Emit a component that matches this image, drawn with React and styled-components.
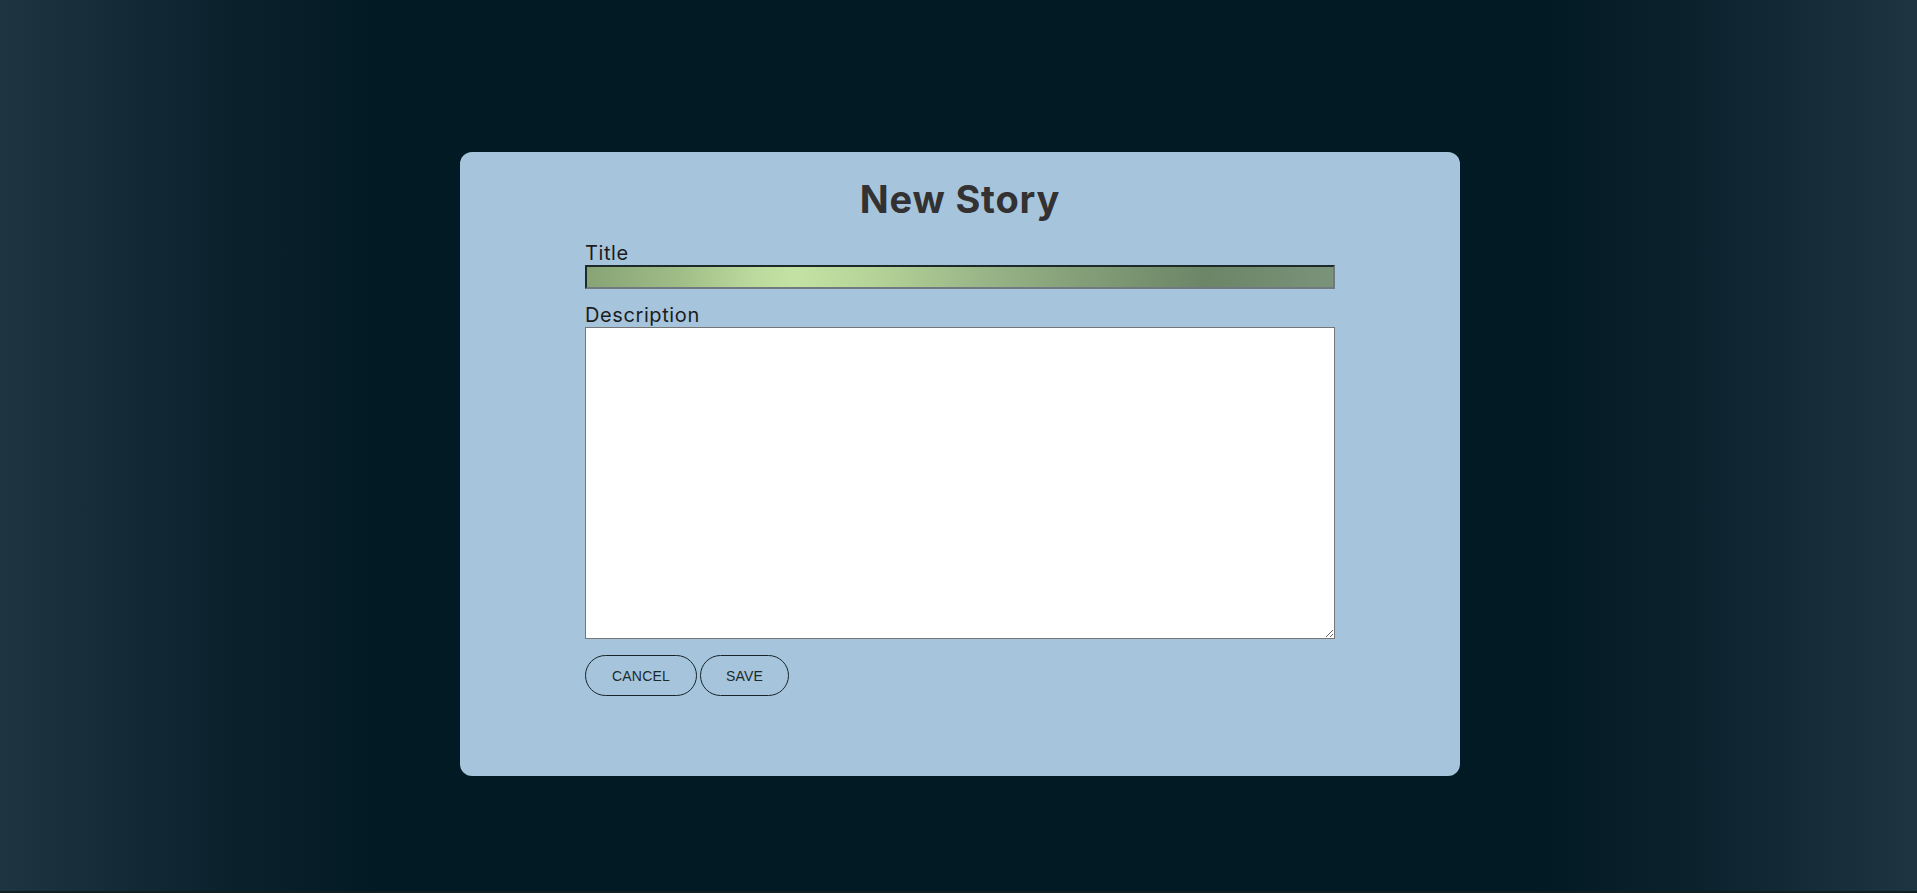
import React from "react";
import styled, { createGlobalStyle } from "styled-components";

const GlobalStyle = createGlobalStyle`
  html {
    background: #0f1f22;
  }
  body {
    margin: 0;
    font-family: "Inter", "Liberation Sans", sans-serif;
  }
  * {
    box-sizing: border-box;
  }
`;

const Page = styled.div`
  height: 891px;
  padding: 152px 0 0 3px;
  background: linear-gradient(
    to right,
    #1e3441 0%,
    #0b222d 12%,
    #021a24 20%,
    #021a24 80%,
    #0b222d 88%,
    #1e3441 100%
  );
`;

const Card = styled.section`
  width: 1000px;
  height: 624px;
  margin: 0 auto;
  padding: 24px 125px 0;
  background: #a6c5dc;
  border-radius: 12px;
`;

const Heading = styled.h1`
  margin: 0 0 19px;
  font-family: "Inter", sans-serif;
  font-weight: 700;
  font-size: 38px;
  line-height: 46px;
  color: #333131;
  text-align: center;
  letter-spacing: 0.8px;
`;

const Form = styled.form`
  display: flex;
  flex-direction: column;
`;

const Label = styled.label`
  display: block;
  font-family: "Inter", sans-serif;
  font-weight: 400;
  font-size: 20px;
  line-height: 24px;
  letter-spacing: 0.6px;
  color: #1c1c1c;
  margin-top: ${(p) => p.$gap || 0}px;
`;

const TitleInput = styled.input`
  display: block;
  width: 750px;
  height: 24px;
  margin: 0;
  padding: 0 4px;
  border-style: solid;
  border-width: 2px;
  border-color: #1d2a2a #6f7b80 #6f7b80 #1d2a2a;
  background: linear-gradient(
    to right,
    #88a375 0%,
    #9fbc87 12%,
    #bbd99c 22%,
    #c3e2a3 28%,
    #b6d498 38%,
    #98b386 54%,
    #819c76 68%,
    #6c8567 83%,
    #7a937a 100%
  );
  outline: none;
`;

const Description = styled.textarea`
  display: block;
  width: 750px;
  height: 312px;
  margin: 0;
  border: 1px solid #767676;
  background: #ffffff;
  font-family: "Inter", sans-serif;
  font-size: 14px;
  resize: both;
  outline: none;
`;

const ButtonRow = styled.div`
  display: flex;
  gap: 3px;
  margin-top: 16px;
`;

const PillButton = styled.button`
  height: 41px;
  padding: 0 ${(p) => p.$pad}px;
  border: 1px solid #16242a;
  border-radius: 21px;
  background: transparent;
  color: #1b2a2c;
  font-family: "Liberation Sans", Arial, sans-serif;
  font-size: 14px;
  letter-spacing: 0.2px;
  text-transform: uppercase;
  cursor: pointer;
`;

export default function App() {
  return (
    <>
      <GlobalStyle />
      <Page>
        <Card>
          <Heading>New Story</Heading>
          <Form onSubmit={(e) => e.preventDefault()}>
            <Label htmlFor="title">Title</Label>
            <TitleInput id="title" type="text" />
            <Label htmlFor="desc" $gap={14}>
              Description
            </Label>
            <Description id="desc" />
            <ButtonRow>
              <PillButton type="button" $pad={26}>
                Cancel
              </PillButton>
              <PillButton type="submit" $pad={25}>
                Save
              </PillButton>
            </ButtonRow>
          </Form>
        </Card>
      </Page>
    </>
  );
}
